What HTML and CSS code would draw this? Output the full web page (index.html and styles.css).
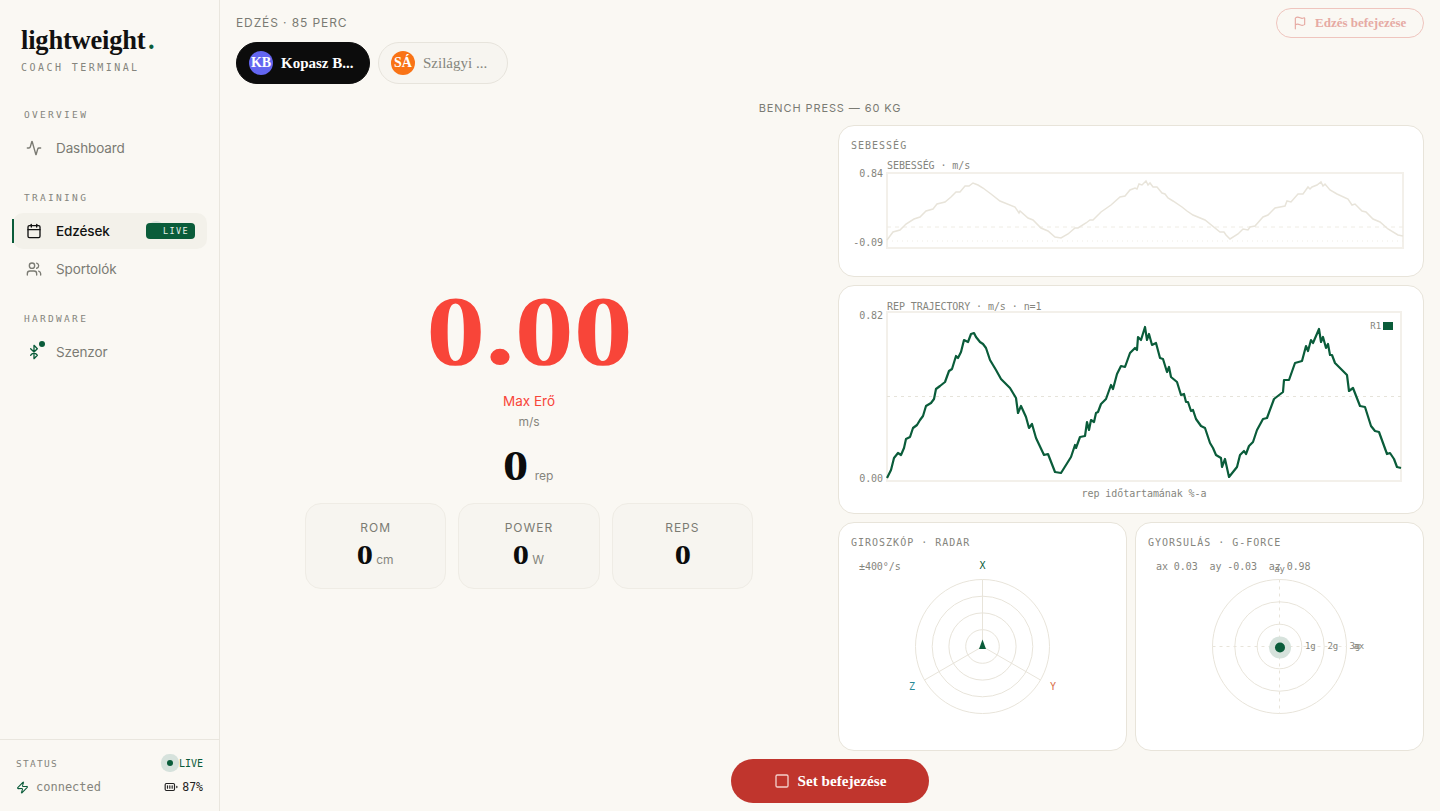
FILE: index.html
```html
<!DOCTYPE html>
<html lang="hu">

<head>
    <meta charset="UTF-8">
    <meta name="viewport" content="width=device-width, initial-scale=1.0">
    <title>lightweight - coach terminal</title>
    <link rel="stylesheet" href="styles.css">
</head>

<body>
    <aside class="sidebar">
        <div class="brand">
            <div class="brandName">lightweight<span class="brandDot">.</span></div>
            <div class="brandSub">COACH TERMINAL</div>
        </div>

        <nav class="nav">
            <div class="navLabel">OVERVIEW</div>
            <a class="navItem">
                <svg class="icon" viewBox="0 0 24 24"><path d="M22 12h-2.48a2 2 0 0 0-1.93 1.46l-2.35 8.36a.25.25 0 0 1-.48 0L9.24 2.18a.25.25 0 0 0-.48 0l-2.35 8.36A2 2 0 0 1 4.49 12H2"/></svg>
                Dashboard
            </a>

            <div class="navLabel">TRAINING</div>
            <a class="navItem active">
                <svg class="icon" viewBox="0 0 24 24"><path d="M8 2v4"/><path d="M16 2v4"/><rect x="3" y="4" width="18" height="18" rx="2"/><path d="M3 10h18"/></svg>
                Edzések
                <span class="liveBadge">LIVE</span>
            </a>
            <a class="navItem">
                <svg class="icon" viewBox="0 0 24 24"><path d="M16 21v-2a4 4 0 0 0-4-4H6a4 4 0 0 0-4 4v2"/><circle cx="9" cy="7" r="4"/><path d="M22 21v-2a4 4 0 0 0-3-3.87"/><path d="M16 3.13a4 4 0 0 1 0 7.75"/></svg>
                Sportolók
            </a>

            <div class="navLabel">HARDWARE</div>
            <a class="navItem">
                <span class="sensorIcon">
                    <svg class="icon green" viewBox="0 0 24 24"><path d="m7 7 10 10-5 5V2l5 5L7 17"/></svg>
                    <span class="sensorDot"></span>
                </span>
                Szenzor
            </a>
        </nav>

        <div class="status">
            <div class="statusRow">
                <span class="statusLabel">STATUS</span>
                <span class="statusLive"><span class="pulse"></span>LIVE</span>
            </div>
            <div class="statusRow">
                <span class="connected">
                    <svg class="iconSmall green" viewBox="0 0 24 24"><path d="M4 14a1 1 0 0 1-.78-1.63l9.9-10.2a.5.5 0 0 1 .86.46l-1.92 6.02A1 1 0 0 0 13 10h7a1 1 0 0 1 .78 1.63l-9.9 10.2a.5.5 0 0 1-.86-.46l1.92-6.02A1 1 0 0 0 11 14z"/></svg>
                    connected
                </span>
                <span class="battery">
                    <svg class="iconSmall" viewBox="0 0 24 24"><rect x="2" y="6" width="16" height="12" rx="2"/><path d="M22 11v2"/><path d="M6 10v4"/><path d="M10 10v4"/><path d="M14 10v4"/></svg>
                    87%
                </span>
            </div>
        </div>
    </aside>

    <main class="main">
        <header class="topBar">
            <div class="sessionTitle">EDZÉS · 85 PERC</div>
            <button type="button" class="endSession">
                <svg class="iconSmall" viewBox="0 0 24 24"><path d="M4 22V4a1 1 0 0 1 .4-.8A6 6 0 0 1 8 2c3 0 5 2 7.3 2q2 0 3.1-.8A1 1 0 0 1 20 4v10a1 1 0 0 1-.4.8A6 6 0 0 1 16 16c-3 0-5-2-8-2a8 8 0 0 0-4 1"/></svg>
                Edzés befejezése
            </button>
        </header>

        <div class="athletes">
            <div class="athlete selected"><span class="avatar indigo">KB</span>Kopasz B...</div>
            <div class="athlete"><span class="avatar orange">SÁ</span>Szilágyi ...</div>
        </div>

        <div class="exercise">BENCH PRESS — 60 KG</div>

        <section class="workspace">
            <div class="live">
                <div class="bigValue">0.00</div>
                <div class="bigLabel">Max Erő</div>
                <div class="bigUnit">m/s</div>
                <div class="repLine"><span class="repValue">0</span><span class="repUnit">rep</span></div>
                <div class="stats">
                    <div class="stat">
                        <div class="statName">ROM</div>
                        <div class="statValue"><span class="statNum">0</span><span class="statUnit">cm</span></div>
                    </div>
                    <div class="stat">
                        <div class="statName">POWER</div>
                        <div class="statValue"><span class="statNum">0</span><span class="statUnit">W</span></div>
                    </div>
                    <div class="stat">
                        <div class="statName">REPS</div>
                        <div class="statValue"><span class="statNum">0</span></div>
                    </div>
                </div>
            </div>

            <div class="charts">
                <div class="card wide">
                    <div class="cardTitle">SEBESSÉG</div>
                    <svg class="chart" viewBox="839 151 584 125">
                        <rect class="frame" x="887" y="173" width="516" height="75"/>
                        <line class="refDash" x1="887" y1="227" x2="1403" y2="227"/>
                        <line class="refDot" x1="887" y1="241" x2="1403" y2="241"/>
                        <polyline class="speedLine" points="887,240 893,232 900,230 906,224 914,219 920,217 926,211 933,209 937,204 945,202 951,197 956,192 960,192 965,186 969,186 973,183 978,185 983,188 991,194 1000,201 1015,207 1019,213 1020,211 1028,218 1033,220 1041,228 1048,231 1055,237 1061,238 1068,234 1075,228 1078,228 1086,223 1090,220 1093,220 1101,212 1111,205 1120,197 1125,196 1130,190 1135,188 1137,189 1139,184 1142,185 1146,181 1148,185 1150,183 1153,187 1157,187 1162,193 1165,194 1168,198 1173,201 1182,207 1187,211 1193,215 1205,220 1220,232 1224,232 1226,235 1230,239 1238,234 1243,229 1248,230 1250,227 1255,226 1263,217 1268,215 1275,208 1285,206 1287,201 1291,202 1298,194 1303,194 1308,187 1310,189 1312,187 1317,185 1321,182 1323,186 1325,184 1330,190 1337,194 1348,199 1352,205 1355,204 1362,211 1366,212 1373,219 1380,222 1388,229 1398,235 1403,236"/>
                        <text class="axisText" x="887" y="169">SEBESSÉG · m/s</text>
                        <text class="axisText end" x="883" y="177">0.84</text>
                        <text class="axisText end" x="883" y="246">-0.09</text>
                    </svg>
                </div>

                <div class="card wide">
                    <svg class="chart" viewBox="839 286 584 227">
                        <rect class="frame" x="887" y="312" width="514" height="169"/>
                        <line class="refDash light" x1="887" y1="396.500" x2="1401" y2="396.500"/>
                        <polyline class="repLineChart" points="887,478 891,470 894,458 898,453 901,455 904,448 906,439 910,437 913,428 917,425 920,420 923,416 926,406 931,403 934,399 936,389 940,386 945,382 949,371 952,369 956,356 958,358 961,352 964,340 968,342 971,334 974,333 976,337 980,342 983,344 986,348 990,360 996,370 1001,379 1010,388 1016,398 1018,413 1021,406 1026,417 1029,428 1032,424 1036,438 1044,455 1048,454 1055,472 1061,473 1066,465 1071,457 1075,445 1076,448 1080,437 1085,436 1087,422 1089,430 1091,420 1094,422 1096,413 1098,412 1101,404 1106,399 1111,385 1113,389 1117,374 1121,366 1125,367 1130,353 1135,348 1137,350 1138,337 1141,340 1145,327 1147,340 1149,334 1152,345 1156,343 1160,358 1163,359 1167,372 1169,367 1171,377 1177,382 1181,395 1184,394 1186,402 1188,402 1191,411 1193,410 1196,419 1201,426 1205,428 1210,443 1213,448 1216,455 1221,458 1222,467 1225,459 1229,477 1237,467 1240,455 1244,451 1246,454 1249,446 1253,442 1257,430 1263,419 1267,418 1274,399 1283,392 1284,380 1289,380 1295,363 1302,361 1306,346 1308,351 1311,340 1313,343 1319,329 1321,342 1323,337 1326,348 1328,344 1330,355 1332,355 1335,363 1347,375 1349,391 1353,388 1360,406 1365,407 1371,426 1375,431 1379,432 1387,454 1390,453 1394,459 1397,467 1401,468"/>
                        <text class="axisText" x="887" y="310">REP TRAJECTORY · m/s · n=1</text>
                        <text class="axisText end" x="883" y="319">0.82</text>
                        <text class="axisText end" x="883" y="482">0.00</text>
                        <text class="axisText small end" x="1381" y="329">R1</text>
                        <rect class="legendSwatch" x="1383" y="322" width="10" height="8"/>
                        <text class="axisText middle" x="1144" y="497">rep időtartamának %-a</text>
                    </svg>
                </div>

                <div class="card">
                    <div class="cardTitle">GIROSZKÓP · RADAR</div>
                    <svg class="chart" viewBox="839 548 287 202">
                        <circle class="ring" cx="982.500" cy="646.500" r="67"/>
                        <circle class="ring" cx="982.500" cy="646.500" r="50.300"/>
                        <circle class="ring" cx="982.500" cy="646.500" r="33.600"/>
                        <circle class="ring" cx="982.500" cy="646.500" r="16.800"/>
                        <line class="ring" x1="982.500" y1="646.500" x2="982.500" y2="579.500"/>
                        <line class="ring" x1="982.500" y1="646.500" x2="924.500" y2="680"/>
                        <line class="ring" x1="982.500" y1="646.500" x2="1040.500" y2="680"/>
                        <polygon class="needle" points="982.500,639.500 979,649 986,649"/>
                        <text class="axisText" x="859" y="570">±400°/s</text>
                        <text class="axisText middle axisX" x="982.500" y="569">X</text>
                        <text class="axisText middle axisZ" x="912" y="690">Z</text>
                        <text class="axisText middle axisY" x="1053" y="690">Y</text>
                    </svg>
                </div>

                <div class="card">
                    <div class="cardTitle">GYORSULÁS · G-FORCE</div>
                    <svg class="chart" viewBox="1136 548 287 202">
                        <circle class="ring" cx="1279.500" cy="646.500" r="67"/>
                        <circle class="ring" cx="1279.500" cy="646.500" r="44.700"/>
                        <circle class="ring" cx="1279.500" cy="646.500" r="22.300"/>
                        <line class="cross" x1="1212.500" y1="646.500" x2="1346.500" y2="646.500"/>
                        <line class="cross" x1="1279.500" y1="579.500" x2="1279.500" y2="713.500"/>
                        <circle class="halo" cx="1280" cy="647.500" r="11"/>
                        <circle class="needle" cx="1280" cy="647.500" r="5"/>
                        <text class="axisText" x="1156" y="570" xml:space="preserve">ax 0.03  ay -0.03  az 0.98</text>
                        <text class="axisText small middle" x="1279.500" y="572">ay</text>
                        <text class="axisText small" x="1305" y="649">1g</text>
                        <text class="axisText small" x="1327.500" y="649">2g</text>
                        <text class="axisText small" x="1349.500" y="649">3g</text>
                        <text class="axisText small" x="1353.500" y="649">ax</text>
                    </svg>
                </div>
            </div>
        </section>

        <footer class="bottomBar">
            <button type="button" class="endSet">
                <svg class="icon" viewBox="0 0 24 24"><rect x="3" y="3" width="18" height="18" rx="2"/></svg>
                Set befejezése
            </button>
        </footer>
    </main>
</body>

</html>
```

FILE: styles.css
```css
* {
    margin: 0;
    padding: 0;
    box-sizing: border-box;
}

html,
body {
    width: 100%;
    height: 100%;
    overflow: hidden;
}

body {
    display: flex;
    background-color: #faf8f3;
    color: #0c0c0c;
    font-family: Inter, "Liberation Sans", sans-serif;
}

.icon,
.iconSmall {
    fill: none;
    stroke: currentColor;
    stroke-width: 2;
    stroke-linecap: round;
    stroke-linejoin: round;
    flex-shrink: 0;
}

.icon {
    width: 16px;
    height: 16px;
}

.iconSmall {
    width: 14px;
    height: 14px;
}

.green {
    color: #0a5c3a;
}

/* sidebar */
.sidebar {
    width: 220px;
    height: 100%;
    flex-shrink: 0;
    display: flex;
    flex-direction: column;
    border-right: 1px solid #e9e6de;
}

.brand {
    padding: 25px 0 0 21px;
}

.brandName {
    font-family: "Liberation Serif", serif;
    font-weight: bold;
    font-size: 26.500px;
    line-height: 30px;
    letter-spacing: -0.2px;
    color: #111;
}

.brandDot {
    color: #0a5c3a;
    margin-left: 2.500px;
}

.brandSub {
    margin-top: 6px;
    font-family: "DejaVu Sans Mono", monospace;
    font-size: 10px;
    line-height: 14px;
    letter-spacing: 2.450px;
    color: #85857d;
}

.nav {
    flex: 1;
    padding: 34px 12px 0 12px;
}

.navLabel {
    font-family: "DejaVu Sans Mono", monospace;
    font-size: 9.500px;
    line-height: 12px;
    letter-spacing: 2.300px;
    color: #85857d;
    padding-left: 12px;
    margin: 26px 0 9px 0;
}

.navLabel:first-child {
    margin-top: 0;
}

.navItem {
    position: relative;
    display: flex;
    align-items: center;
    gap: 14px;
    height: 36px;
    margin-bottom: 2px;
    padding: 0 12px 0 14px;
    font-size: 13.500px;
    letter-spacing: -0.1px;
    color: #7b7b73;
    border-radius: 10px;
}

.navItem.active {
    color: #111;
    font-weight: 500;
    background-color: #f3f1ea;
    margin-left: 1px;
    padding-left: 13px;
    isolation: isolate;
}

.navItem.active::before {
    position: absolute;
    left: -1px;
    top: 6px;
    width: 2px;
    height: 24px;
    background-color: #0a5c3a;
    content: '';
}

.liveBadge {
    position: relative;
    margin-left: auto;
    width: 49px;
    height: 16px;
    padding-right: 6px;
    background-color: #0a5c3a;
    border-radius: 4px;
    color: #e8f0ea;
    font-family: "DejaVu Sans Mono", monospace;
    font-size: 8.500px;
    font-weight: normal;
    line-height: 16px;
    letter-spacing: 1.400px;
    text-align: right;
}

.liveBadge::before {
    position: absolute;
    left: 2px;
    top: -2px;
    width: 16px;
    height: 16px;
    border-radius: 50%;
    background-color: #d6e2dc;
    z-index: -1;
    content: '';
}

.sensorIcon {
    position: relative;
    display: flex;
}

.sensorDot {
    position: absolute;
    right: -3px;
    top: -3px;
    width: 6px;
    height: 6px;
    border-radius: 50%;
    background-color: #0a5c3a;
}

.status {
    height: 72px;
    padding: 15px 16px 0 16px;
    border-top: 1px solid #e9e6de;
    font-family: "DejaVu Sans Mono", monospace;
}

.statusRow {
    display: flex;
    align-items: center;
    justify-content: space-between;
    height: 16px;
    margin-bottom: 8px;
}

.statusLabel {
    font-size: 9.500px;
    letter-spacing: 1.300px;
    color: #85857d;
}

.statusLive {
    position: relative;
    display: flex;
    align-items: center;
    gap: 6px;
    font-size: 10px;
    color: #0a5c3a;
}

.pulse {
    width: 6px;
    height: 6px;
    border-radius: 50%;
    background-color: #0a5c3a;
    box-shadow: 0 0 0 6px #d6e2dc;
}

.connected {
    display: flex;
    align-items: center;
    gap: 7px;
    font-size: 12px;
    color: #85857d;
}

.connected .iconSmall {
    width: 13px;
    height: 13px;
}

.battery {
    display: flex;
    align-items: center;
    gap: 4px;
    font-size: 11.500px;
    color: #222;
}

/* main */
.main {
    flex: 1;
    min-width: 0;
    height: 100%;
    display: flex;
    flex-direction: column;
    padding: 8px 16px;
}

.topBar {
    display: flex;
    align-items: center;
    justify-content: space-between;
    height: 30px;
}

.sessionTitle {
    padding-bottom: 2px;
    font-size: 12px;
    letter-spacing: 0.900px;
    color: #7b7b73;
}

.endSession {
    display: flex;
    align-items: center;
    gap: 8px;
    width: 148px;
    height: 30px;
    padding-left: 16px;
    border: 1px solid #efc5be;
    border-radius: 15px;
    background: transparent;
    color: #e6aaa3;
    font-family: "Liberation Serif", serif;
    font-weight: bold;
    font-size: 13px;
}

.athletes {
    display: flex;
    gap: 8px;
    margin-top: 4px;
}

.athlete {
    display: flex;
    align-items: center;
    gap: 8px;
    width: 130px;
    height: 42px;
    padding-left: 12px;
    border: 1px solid #e7e4dc;
    border-radius: 21px;
    background-color: #f7f5f0;
    color: #85857d;
    font-family: "Liberation Serif", serif;
    font-size: 15px;
}

.athlete.selected {
    width: 134px;
    border-color: #0c0c0c;
    background-color: #0c0c0c;
    color: #fff;
    font-weight: bold;
}

.avatar {
    width: 24px;
    height: 24px;
    border-radius: 50%;
    color: #fff;
    font-weight: bold;
    font-size: 14px;
    line-height: 24px;
    text-align: center;
}

.indigo {
    background-color: #6366f1;
}

.orange {
    background-color: #f97316;
}

.exercise {
    margin-top: 16px;
    height: 16px;
    font-size: 11px;
    line-height: 16px;
    letter-spacing: 0.900px;
    color: #7b7b73;
    text-align: center;
}

.workspace {
    flex: 1;
    min-height: 0;
    display: grid;
    grid-template-columns: 1fr 1fr;
    gap: 16px;
    margin-top: 9px;
}

.live {
    display: flex;
    flex-direction: column;
    align-items: center;
    justify-content: center;
    padding-bottom: 9px;
}

.bigValue {
    font-family: "Liberation Serif", serif;
    font-weight: bold;
    font-size: 100px;
    line-height: 104px;
    color: #f84539;
    transform: scaleX(1.18);
}

.bigLabel {
    margin-top: 8px;
    font-size: 13.500px;
    line-height: 20px;
    color: #f84539;
}

.bigUnit {
    margin-top: 1px;
    font-size: 12px;
    line-height: 20px;
    color: #85857d;
}

.repLine {
    display: flex;
    align-items: baseline;
    gap: 9px;
    margin-top: 10px;
    height: 48px;
}

.repValue {
    font-family: "Liberation Serif", serif;
    font-weight: bold;
    font-size: 42px;
    line-height: 48px;
    transform: scaleX(1.2);
}

.repUnit {
    font-size: 12px;
    color: #85857d;
}

.stats {
    display: grid;
    grid-template-columns: repeat(3, 1fr);
    gap: 12px;
    width: 448px;
    margin-top: 13px;
}

.stat {
    height: 86px;
    padding-top: 15px;
    background-color: #f7f5f0;
    border: 1px solid #efece5;
    border-radius: 16px;
    text-align: center;
}

.statName {
    font-size: 12px;
    line-height: 18px;
    letter-spacing: 1px;
    color: #7b7b73;
}

.statValue {
    display: flex;
    align-items: baseline;
    justify-content: center;
    gap: 5px;
    margin-top: 2px;
}

.statNum {
    font-family: "Liberation Serif", serif;
    font-weight: bold;
    font-size: 27px;
    line-height: 32px;
    transform: scaleX(1.2);
}

.statUnit {
    font-size: 12px;
    color: #85857d;
}

/* chart cards */
.charts {
    min-height: 0;
    display: grid;
    grid-template-columns: 1fr 1fr;
    grid-template-rows: 152px 1fr 1fr;
    gap: 8px;
}

.card {
    display: flex;
    flex-direction: column;
    min-height: 0;
    background-color: #fff;
    border: 1px solid #e8e4da;
    border-radius: 16px;
    overflow: hidden;
}

.wide {
    grid-column: span 2;
}

.cardTitle {
    height: 25px;
    padding: 14px 0 0 12px;
    font-family: "DejaVu Sans Mono", monospace;
    font-size: 10px;
    line-height: 12px;
    letter-spacing: 1px;
    color: #85857d;
}

.chart {
    flex: 1;
    min-height: 0;
    width: 100%;
    display: block;
}

.frame {
    fill: none;
    stroke: #f3f0ea;
    stroke-width: 2;
}

.refDash {
    stroke: #efece4;
    stroke-width: 1;
    stroke-dasharray: 4 4;
}

.refDash.light {
    stroke: #e6e3da;
    stroke-dasharray: 3 4;
}

.refDot {
    stroke: #efece4;
    stroke-width: 1;
    stroke-dasharray: 1 4;
}

.speedLine {
    fill: none;
    stroke: #e8e4da;
    stroke-width: 1.500;
}

.repLineChart {
    fill: none;
    stroke: #0a5c3a;
    stroke-width: 2.200;
    stroke-linejoin: round;
}

.axisText {
    font-family: "DejaVu Sans Mono", monospace;
    font-size: 10px;
    letter-spacing: -0.08px;
    fill: #85857d;
}

.axisText.small {
    font-size: 9px;
}

.end {
    text-anchor: end;
}

.middle {
    text-anchor: middle;
}

.axisX {
    fill: #0a5c3a;
}

.axisY {
    fill: #d9704a;
}

.axisZ {
    fill: #2a8a96;
}

.legendSwatch,
.needle {
    fill: #0a5c3a;
}

.ring {
    fill: none;
    stroke: #e8e4da;
    stroke-width: 1;
}

.cross {
    stroke: #e8e4da;
    stroke-width: 1;
    stroke-dasharray: 3 4;
}

.halo {
    fill: #d6e2dc;
}

/* bottom button */
.bottomBar {
    display: flex;
    justify-content: center;
    margin-top: 8px;
}

.endSet {
    display: flex;
    align-items: center;
    justify-content: center;
    gap: 8px;
    width: 198px;
    height: 44px;
    border: 0;
    border-radius: 22px;
    background-color: #c0352d;
    color: #fff;
    font-family: "Liberation Serif", serif;
    font-weight: bold;
    font-size: 15.200px;
}

.endSet .icon {
    color: #f3cfca;
}
```
